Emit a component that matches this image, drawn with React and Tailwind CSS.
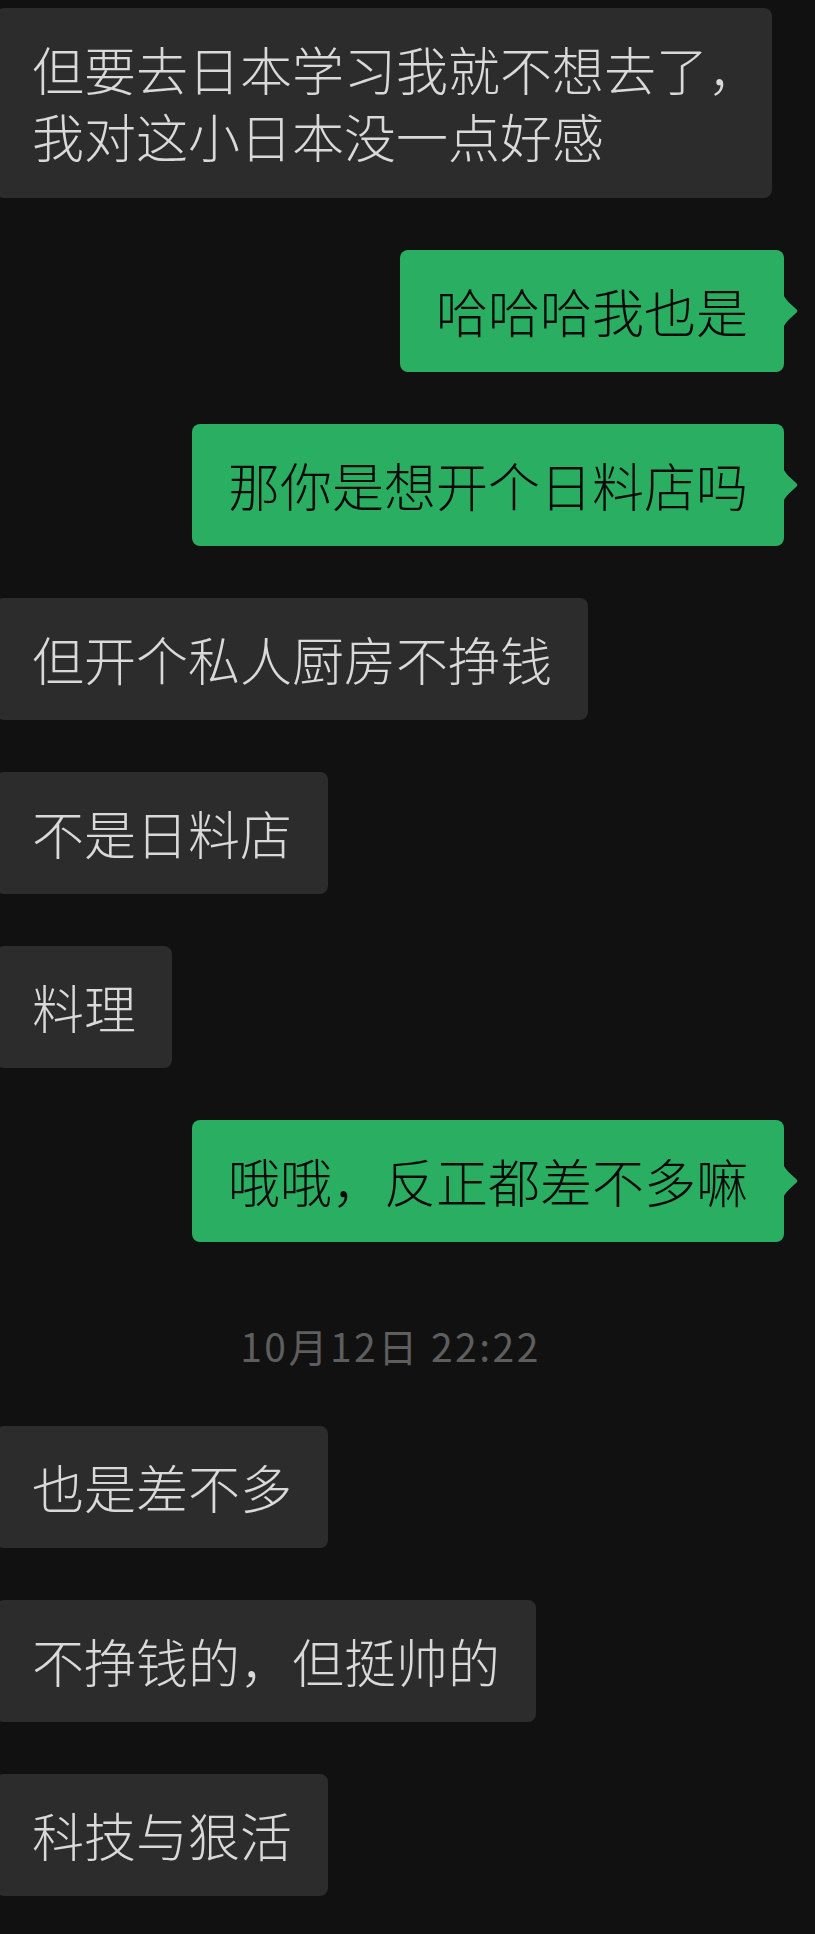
import React from "react";

const messages = [
  { from: "them", lines: ["但要去日本学习我就不想去了，", "我对这小日本没一点好感"], wide: true },
  { from: "me", lines: ["哈哈哈我也是"] },
  { from: "me", lines: ["那你是想开个日料店吗"] },
  { from: "them", lines: ["但开个私人厨房不挣钱"] },
  { from: "them", lines: ["不是日料店"] },
  { from: "them", lines: ["料理"] },
  { from: "me", lines: ["哦哦，反正都差不多嘛"] },
  { time: "10月12日 22:22" },
  { from: "them", lines: ["也是差不多"] },
  { from: "them", lines: ["不挣钱的，但挺帅的"] },
  { from: "them", lines: ["科技与狠活"] },
];

function Tail() {
  return (
    <svg
      className="absolute right-[-15px] top-1/2 -translate-y-1/2"
      width="16"
      height="34"
      viewBox="0 0 16 34"
    >
      <path
        d="M0 0 C1.5 3 3 5.5 5.5 8 L13.6 15.6 Q15.3 17 13.6 18.4 L5.5 26 C3 28.5 1.5 31 0 34 Z"
        fill="#2aae62"
      />
    </svg>
  );
}

function Bubble({ msg }) {
  if (msg.from === "me") {
    return (
      <div className="flex justify-end pr-[31px]">
        <div className="relative rounded-[8px] bg-[#2aae62] px-[36px] pt-[27px] pb-[28px] text-[52px] font-light leading-[67px] text-[#0b0b0b]">
          {msg.lines.map((l) => (
            <div key={l} className="whitespace-nowrap">{l}</div>
          ))}
          <Tail />
        </div>
      </div>
    );
  }
  return (
    <div className="flex justify-start">
      <div
        className={
          "-ml-[4px] rounded-[8px] bg-[#2c2c2c] px-[36px] pt-[27px] pb-[28px] text-[52px] font-light leading-[67px] text-[#d9d9d9] " +
          (msg.wide ? "w-[776px] pb-[29px]" : "")
        }
      >
        {msg.lines.map((l) => (
          <div key={l} className="whitespace-nowrap">{l}</div>
        ))}
      </div>
    </div>
  );
}

export default function App() {
  return (
    <div className="min-h-screen overflow-hidden bg-[#111111] pt-[8px] font-['Noto_Sans_CJK_SC','Noto_Sans',sans-serif]">
      <div className="flex flex-col gap-[52px]">
        {messages.map((m, i) =>
          m.time ? (
            <div key={i} className="flex h-[80px] justify-center pr-[34px] pt-[23px]">
              <span className="text-[39px] leading-[56px] tracking-[2.5px] text-[#5e5e5e]">{m.time}</span>
            </div>
          ) : (
            <Bubble key={i} msg={m} />
          )
        )}
      </div>
    </div>
  );
}
